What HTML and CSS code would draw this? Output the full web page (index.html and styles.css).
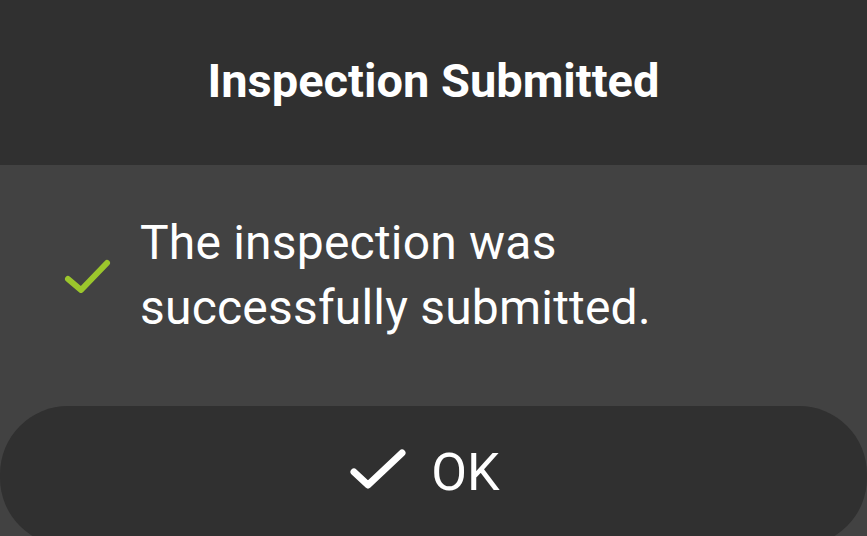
FILE: index.html
```html
<!DOCTYPE html>
<html>
<head>
<meta charset="utf-8">
<link rel="stylesheet" href="styles.css">
</head>
<body>
<div class="dialog">
  <header class="header"><h1 class="title">Inspection Submitted</h1></header>
  <main class="content">
    <svg class="ok-icon" width="50" height="36" viewBox="0 0 50 36"><path d="M5 22 L18 33 L44 6" fill="none" stroke="#9bc62c" stroke-width="6" stroke-linecap="round" stroke-linejoin="round"/></svg>
    <p class="message">The inspection was<br>successfully submitted.</p>
  </main>
  <div class="actions">
    <button class="ok-btn">
      <svg class="btn-icon" width="58" height="44" viewBox="0 0 58 44"><path d="M5 24 L19 37 L53 5" fill="none" stroke="#fff" stroke-width="7" stroke-linecap="round" stroke-linejoin="round"/></svg>
      <span>OK</span>
    </button>
  </div>
</div>
</body>
</html>
```
FILE: styles.css
```css
html, body { margin: 0; padding: 0; }
body { width: 867px; height: 536px; overflow: hidden; background: #424242; font-family: Roboto, "Noto Sans", sans-serif; color: #fff; }
.dialog { display: flex; flex-direction: column; height: 536px; }
.header { flex: none; height: 165px; background: #303030; display: flex; align-items: center; justify-content: center; }
.title { margin: 0; font-size: 47px; font-weight: 700; padding-bottom: 4px; }
.content { flex: none; box-sizing: border-box; display: flex; align-items: center; padding: 0 0 22px 63px; height: 241px; background: #424242; }
.ok-icon { margin-right: 27px; flex: none; }
.message { margin: 0; font-size: 48px; line-height: 65px; font-weight: 400; letter-spacing: 0.2px; }
.actions { flex: none; height: 130px; overflow: hidden; }
.ok-btn { width: 867px; height: 140px; border: none; border-radius: 68px; background: #303030; color: #fff; font-family: Roboto, sans-serif; font-size: 52px; display: flex; align-items: flex-start; justify-content: center; padding: 36px 18px 0 0; gap: 24px; }
.btn-icon { margin-top: 6px; }
```
